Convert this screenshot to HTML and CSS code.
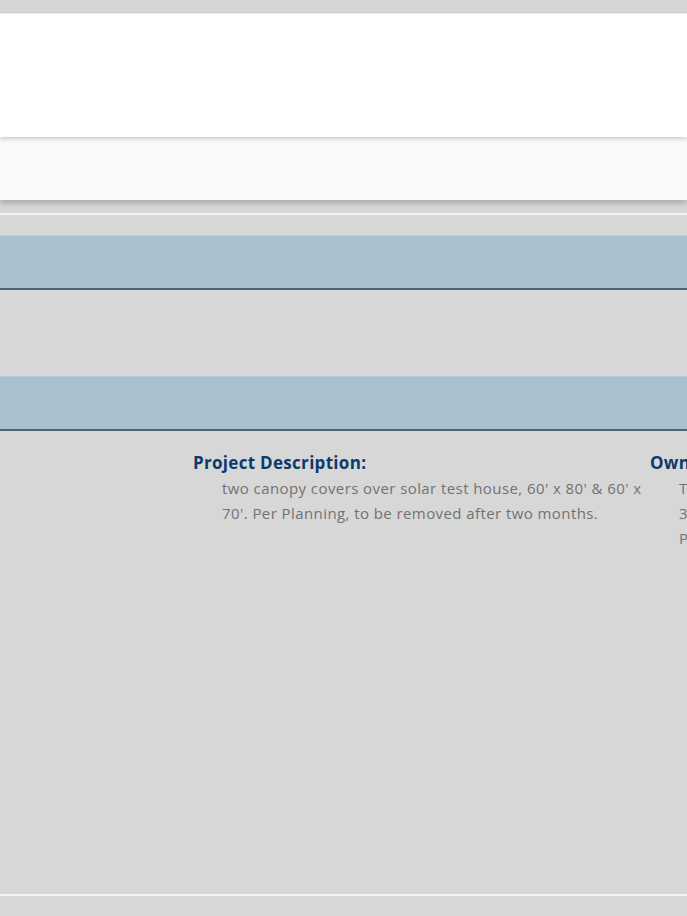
FILE: index.html
```html
<!DOCTYPE html>
<html lang="en">
<head>
  <meta charset="UTF-8">
  <title>Permit Detail</title>
  <link rel="stylesheet" href="styles.css">
</head>
<body>
  <div class="topstrip"></div>
  <header class="header"></header>
  <nav class="subbar"></nav>
  <div class="rule"></div>

  <section class="panel">
    <div class="panel-head"></div>
    <div class="panel-body short"></div>
  </section>

  <section class="panel">
    <div class="panel-head"></div>
    <div class="panel-body details">
      <div class="col col-left"></div>
      <div class="col col-mid">
        <h3 class="label">Project Description:</h3>
        <p class="value">two canopy covers over solar test house, 60' x 80' &amp; 60' x 70'. Per Planning, to be removed after two months.</p>
      </div>
      <div class="col col-right">
        <h3 class="label">Owner:</h3>
        <p class="value">TRUSTEES OF UNIV<br>3000 NORTH<br>PALO ALTO</p>
      </div>
    </div>
  </section>

  <div class="rule bottom"></div>
</body>
</html>
```

FILE: styles.css
```css
html, body {
  margin: 0;
  padding: 0;
}

body {
  background-color: #d7d7d7;
  font-family: 'Open Sans', Lato, sans-serif;
  width: 687px;
  height: 916px;
  overflow: hidden;
}

.topstrip {
  height: 13px;
  background-color: #d6d6d6;
}

.header {
  height: 123px;
  background-color: #fff;
  border-top: 1px solid #ececec;
  box-shadow: 0 2px 4px rgba(0, 0, 0, 0.18);
  position: relative;
  z-index: 2;
}

.subbar {
  height: 63px;
  background-color: #f9f9f9;
  box-shadow: 0 3px 6px rgba(0, 0, 0, 0.22);
  position: relative;
  z-index: 1;
}

.rule {
  height: 2px;
  background-color: #f4f4f4;
  margin-top: 13px;
}

.panel {
  margin-top: 20px;
}

.panel + .panel {
  margin-top: 0;
}

.panel-head {
  height: 52px;
  background-color: #a9c0cf;
  border-bottom: 2px solid #4b6476;
  border-top: 1px solid #b8cbd8;
}

.panel-body.short {
  height: 86px;
}

.details {
  display: flex;
  box-sizing: border-box;
  height: 463px;
  padding-top: 20px;
}

.col-left {
  width: 193px;
  flex-shrink: 0;
}

.col-mid {
  width: 457px;
  flex-shrink: 0;
}

.col-right {
  flex: 1;
  white-space: nowrap;
  overflow: hidden;
}

.label {
  margin: 0;
  color: #0d3a6c;
  font-size: 17px;
  font-weight: 700;
  line-height: 24px;
  letter-spacing: 0.3px;
}

.value {
  margin: 1px 0 0 29px;
  color: #727272;
  font-size: 15px;
  line-height: 25px;
  letter-spacing: 0.42px;
  padding-right: 6px;
}

.rule.bottom {
  margin-top: 0;
  background-color: #f2f2f2;
}
```
